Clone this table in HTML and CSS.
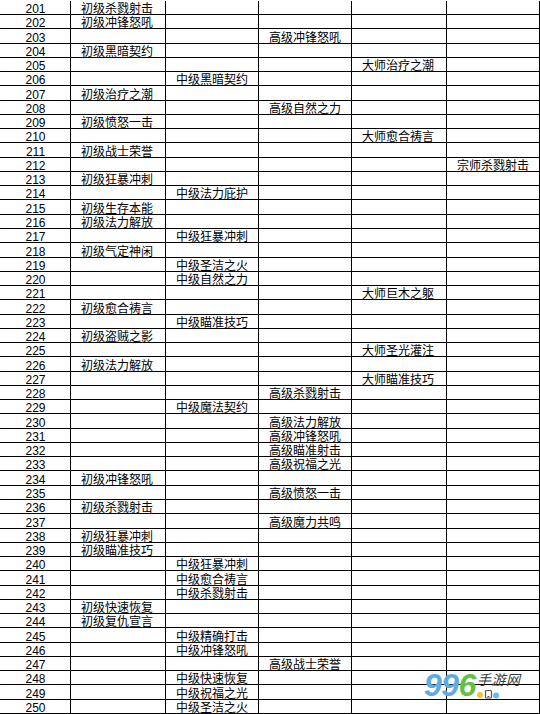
FILE: index.html
```html
<!DOCTYPE html>
<html lang="zh-CN">
<head>
<meta charset="utf-8">
<title>技能表</title>
<link rel="stylesheet" href="styles.css">
</head>
<body>
<div class="page">
<div class="sheet">
<div class="row"><div class="n">201</div><div class="c">初级杀戮射击</div><div class="c"></div><div class="c"></div><div class="c"></div><div class="c"></div></div>
<div class="row"><div class="n">202</div><div class="c">初级冲锋怒吼</div><div class="c"></div><div class="c"></div><div class="c"></div><div class="c"></div></div>
<div class="row"><div class="n">203</div><div class="c"></div><div class="c"></div><div class="c">高级冲锋怒吼</div><div class="c"></div><div class="c"></div></div>
<div class="row"><div class="n">204</div><div class="c">初级黑暗契约</div><div class="c"></div><div class="c"></div><div class="c"></div><div class="c"></div></div>
<div class="row"><div class="n">205</div><div class="c"></div><div class="c"></div><div class="c"></div><div class="c">大师治疗之潮</div><div class="c"></div></div>
<div class="row"><div class="n">206</div><div class="c"></div><div class="c">中级黑暗契约</div><div class="c"></div><div class="c"></div><div class="c"></div></div>
<div class="row"><div class="n">207</div><div class="c">初级治疗之潮</div><div class="c"></div><div class="c"></div><div class="c"></div><div class="c"></div></div>
<div class="row"><div class="n">208</div><div class="c"></div><div class="c"></div><div class="c">高级自然之力</div><div class="c"></div><div class="c"></div></div>
<div class="row"><div class="n">209</div><div class="c">初级愤怒一击</div><div class="c"></div><div class="c"></div><div class="c"></div><div class="c"></div></div>
<div class="row"><div class="n">210</div><div class="c"></div><div class="c"></div><div class="c"></div><div class="c">大师愈合祷言</div><div class="c"></div></div>
<div class="row"><div class="n">211</div><div class="c">初级战士荣誉</div><div class="c"></div><div class="c"></div><div class="c"></div><div class="c"></div></div>
<div class="row"><div class="n">212</div><div class="c"></div><div class="c"></div><div class="c"></div><div class="c"></div><div class="c">宗师杀戮射击</div></div>
<div class="row"><div class="n">213</div><div class="c">初级狂暴冲刺</div><div class="c"></div><div class="c"></div><div class="c"></div><div class="c"></div></div>
<div class="row"><div class="n">214</div><div class="c"></div><div class="c">中级法力庇护</div><div class="c"></div><div class="c"></div><div class="c"></div></div>
<div class="row"><div class="n">215</div><div class="c">初级生存本能</div><div class="c"></div><div class="c"></div><div class="c"></div><div class="c"></div></div>
<div class="row"><div class="n">216</div><div class="c">初级法力解放</div><div class="c"></div><div class="c"></div><div class="c"></div><div class="c"></div></div>
<div class="row"><div class="n">217</div><div class="c"></div><div class="c">中级狂暴冲刺</div><div class="c"></div><div class="c"></div><div class="c"></div></div>
<div class="row"><div class="n">218</div><div class="c">初级气定神闲</div><div class="c"></div><div class="c"></div><div class="c"></div><div class="c"></div></div>
<div class="row"><div class="n">219</div><div class="c"></div><div class="c">中级圣洁之火</div><div class="c"></div><div class="c"></div><div class="c"></div></div>
<div class="row"><div class="n">220</div><div class="c"></div><div class="c">中级自然之力</div><div class="c"></div><div class="c"></div><div class="c"></div></div>
<div class="row"><div class="n">221</div><div class="c"></div><div class="c"></div><div class="c"></div><div class="c">大师巨木之躯</div><div class="c"></div></div>
<div class="row"><div class="n">222</div><div class="c">初级愈合祷言</div><div class="c"></div><div class="c"></div><div class="c"></div><div class="c"></div></div>
<div class="row"><div class="n">223</div><div class="c"></div><div class="c">中级瞄准技巧</div><div class="c"></div><div class="c"></div><div class="c"></div></div>
<div class="row"><div class="n">224</div><div class="c">初级盗贼之影</div><div class="c"></div><div class="c"></div><div class="c"></div><div class="c"></div></div>
<div class="row"><div class="n">225</div><div class="c"></div><div class="c"></div><div class="c"></div><div class="c">大师圣光灌注</div><div class="c"></div></div>
<div class="row"><div class="n">226</div><div class="c">初级法力解放</div><div class="c"></div><div class="c"></div><div class="c"></div><div class="c"></div></div>
<div class="row"><div class="n">227</div><div class="c"></div><div class="c"></div><div class="c"></div><div class="c">大师瞄准技巧</div><div class="c"></div></div>
<div class="row"><div class="n">228</div><div class="c"></div><div class="c"></div><div class="c">高级杀戮射击</div><div class="c"></div><div class="c"></div></div>
<div class="row"><div class="n">229</div><div class="c"></div><div class="c">中级魔法契约</div><div class="c"></div><div class="c"></div><div class="c"></div></div>
<div class="row"><div class="n">230</div><div class="c"></div><div class="c"></div><div class="c">高级法力解放</div><div class="c"></div><div class="c"></div></div>
<div class="row"><div class="n">231</div><div class="c"></div><div class="c"></div><div class="c">高级冲锋怒吼</div><div class="c"></div><div class="c"></div></div>
<div class="row"><div class="n">232</div><div class="c"></div><div class="c"></div><div class="c">高级瞄准射击</div><div class="c"></div><div class="c"></div></div>
<div class="row"><div class="n">233</div><div class="c"></div><div class="c"></div><div class="c">高级祝福之光</div><div class="c"></div><div class="c"></div></div>
<div class="row"><div class="n">234</div><div class="c">初级冲锋怒吼</div><div class="c"></div><div class="c"></div><div class="c"></div><div class="c"></div></div>
<div class="row"><div class="n">235</div><div class="c"></div><div class="c"></div><div class="c">高级愤怒一击</div><div class="c"></div><div class="c"></div></div>
<div class="row"><div class="n">236</div><div class="c">初级杀戮射击</div><div class="c"></div><div class="c"></div><div class="c"></div><div class="c"></div></div>
<div class="row"><div class="n">237</div><div class="c"></div><div class="c"></div><div class="c">高级魔力共鸣</div><div class="c"></div><div class="c"></div></div>
<div class="row"><div class="n">238</div><div class="c">初级狂暴冲刺</div><div class="c"></div><div class="c"></div><div class="c"></div><div class="c"></div></div>
<div class="row"><div class="n">239</div><div class="c">初级瞄准技巧</div><div class="c"></div><div class="c"></div><div class="c"></div><div class="c"></div></div>
<div class="row"><div class="n">240</div><div class="c"></div><div class="c">中级狂暴冲刺</div><div class="c"></div><div class="c"></div><div class="c"></div></div>
<div class="row"><div class="n">241</div><div class="c"></div><div class="c">中级愈合祷言</div><div class="c"></div><div class="c"></div><div class="c"></div></div>
<div class="row"><div class="n">242</div><div class="c"></div><div class="c">中级杀戮射击</div><div class="c"></div><div class="c"></div><div class="c"></div></div>
<div class="row"><div class="n">243</div><div class="c">初级快速恢复</div><div class="c"></div><div class="c"></div><div class="c"></div><div class="c"></div></div>
<div class="row"><div class="n">244</div><div class="c">初级复仇宣言</div><div class="c"></div><div class="c"></div><div class="c"></div><div class="c"></div></div>
<div class="row"><div class="n">245</div><div class="c"></div><div class="c">中级精确打击</div><div class="c"></div><div class="c"></div><div class="c"></div></div>
<div class="row"><div class="n">246</div><div class="c"></div><div class="c">中级冲锋怒吼</div><div class="c"></div><div class="c"></div><div class="c"></div></div>
<div class="row"><div class="n">247</div><div class="c"></div><div class="c"></div><div class="c">高级战士荣誉</div><div class="c"></div><div class="c"></div></div>
<div class="row"><div class="n">248</div><div class="c"></div><div class="c">中级快速恢复</div><div class="c"></div><div class="c"></div><div class="c"></div></div>
<div class="row"><div class="n">249</div><div class="c"></div><div class="c">中级祝福之光</div><div class="c"></div><div class="c"></div><div class="c"></div></div>
<div class="row"><div class="n">250</div><div class="c"></div><div class="c">中级圣洁之火</div><div class="c"></div><div class="c"></div><div class="c"></div></div>
</div>
<div class="logo">
  <div class="digits"><span class="blue">99</span><span class="green">6</span></div>
  <div class="side">
    <div class="brand">手游网</div>
    <svg class="icons" width="26" height="10" viewBox="0 0 26 10">
      <circle cx="3" cy="6" r="3" fill="#f6c431"/>
      <rect x="8.5" y="1.5" width="6" height="7.5" rx="1" fill="#fff" stroke="#555" stroke-width="1.2"/>
      <rect x="10.5" y="7" width="2" height="1" fill="#555"/>
      <circle cx="19" cy="6.5" r="3" fill="#5bc0ea"/>
    </svg>
  </div>
</div>
</div>
</body>
</html>
```

FILE: styles.css
```css
html, body {
  margin: 0;
  padding: 0;
  background: #fff;
}

.page {
  position: relative;
  width: 540px;
  height: 714px;
  overflow: hidden;
}

.sheet {
  display: grid;
  grid-auto-rows: 14.28px;
  padding-top: 0.72px;
  width: 540px;
}

.row {
  display: grid;
  grid-template-columns: 71px 95px 93px 93px 95px 93px;
}

.row > div {
  box-sizing: border-box;
  border-right: 1px solid #000;
  border-bottom: 1px solid #000;
  display: flex;
  align-items: flex-end;
  font-family: "Noto Sans CJK SC", "Noto Sans", sans-serif;
  font-size: 12px;
  line-height: 12px;
  color: #000;
  white-space: nowrap;
}

.row > .c {
  padding-left: 10px;
}

.row > .n {
  justify-content: center;
  padding-left: 1px;
  font-family: "Liberation Sans", Arial, sans-serif;
  line-height: 10px;
}

.logo {
  position: absolute;
  left: 424px;
  top: 669px;
  display: flex;
  align-items: flex-start;
}

.digits {
  font-family: "Liberation Sans", Arial, sans-serif;
  font-weight: bold;
  font-style: italic;
  font-size: 32px;
  line-height: 32px;
  letter-spacing: -0.5px;
}

.blue {
  color: #5eaae2;
}

.green {
  color: #62c04a;
}

.side {
  display: flex;
  flex-direction: column;
  margin-left: 1px;
  margin-top: 3px;
}

.brand {
  font-family: "Noto Sans CJK SC", sans-serif;
  font-style: italic;
  font-size: 14px;
  line-height: 14px;
  color: #3a3a3a;
  letter-spacing: 0.5px;
}

.icons {
  display: block;
  margin-top: 3px;
}
```
